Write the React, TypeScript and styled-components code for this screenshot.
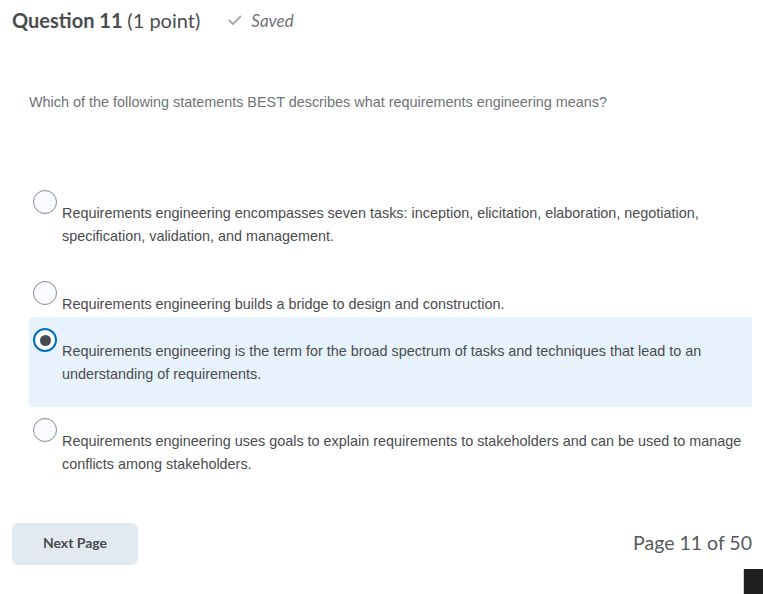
import React from "react";
import styled, { createGlobalStyle } from "styled-components";

const Global = createGlobalStyle`
  html, body { margin: 0; padding: 0; background: #ffffff; }
  * { box-sizing: border-box; }
`;

const Page = styled.div`
  padding: 0 11px 0 12px;
  font-family: Lato, "Open Sans", sans-serif;
  color: #494c4e;
`;

const Header = styled.div`
  display: flex;
  align-items: center;
  height: 40px;
`;

const Title = styled.h2`
  margin: 0;
  font-size: 20px;
  font-weight: 700;
  line-height: 40px;
  color: #494c4e;
  span {
    font-weight: 400;
  }
`;

const SavedTag = styled.div`
  display: flex;
  align-items: center;
  margin-left: 28px;
  gap: 9px;
  font-style: italic;
  font-size: 17px;
  color: #6e7376;
`;

const Body = styled.div`
  padding-left: 17px;
`;

const QuestionText = styled.p`
  margin: 52px 0 0;
  font-family: "Liberation Sans", Arial, sans-serif;
  font-size: 14.4px;
  line-height: 20px;
  color: #6e7376;
`;

const OptionList = styled.div`
  margin-top: 67px;
  display: flex;
  flex-direction: column;
`;

const Option = styled.label<{ $selected?: boolean; $tail: number }>`
  display: flex;
  align-items: flex-start;
  padding: 11px 0 ${(p) => p.$tail}px 4px;
  background: ${(p) => (p.$selected ? "#e8f2fc" : "transparent")};
`;

const Radio = styled.span<{ $checked?: boolean }>`
  flex: 0 0 auto;
  width: 24px;
  height: 24px;
  border-radius: 50%;
  border: ${(p) => (p.$checked ? "2px solid #006fbf" : "1px solid #868c8f")};
  background: ${(p) => (p.$checked ? "#ffffff" : "#f9fbff")};
  display: flex;
  align-items: center;
  justify-content: center;
  &::after {
    content: "";
    display: ${(p) => (p.$checked ? "block" : "none")};
    width: 11px;
    height: 11px;
    border-radius: 50%;
    background: #494c4e;
  }
`;

const OptionText = styled.span`
  margin: 12px 0 0 5px;
  font-family: "Liberation Sans", Arial, sans-serif;
  font-size: 14.4px;
  line-height: 23px;
  color: #494c4e;
`;

const Footer = styled.div`
  margin-top: 26px;
  display: flex;
  align-items: center;
  justify-content: space-between;
`;

const NextButton = styled.button`
  width: 126px;
  height: 42px;
  border: none;
  border-radius: 6px;
  background: #e3e9f1;
  font-family: Lato, sans-serif;
  font-weight: 700;
  font-size: 14px;
  line-height: 40px;
  padding: 0 0 2px;
  color: #494c4e;
`;

const PageCount = styled.div`
  font-size: 19.5px;
  line-height: 24px;
  margin-top: -2px;
  color: #565a5c;
`;

const Corner = styled.div`
  position: fixed;
  right: 0;
  bottom: 0;
  width: 20px;
  height: 25px;
  background: #1f1f1f;
  border-left: 1px solid #d0d0d0;
`;

const options = [
  {
    text: "Requirements engineering encompasses seven tasks: inception, elicitation, elaboration, negotiation, specification, validation, and management.",
    tail: 22,
  },
  {
    text: "Requirements engineering builds a bridge to design and construction.",
    tail: 1,
  },
  {
    text: "Requirements engineering is the term for the broad spectrum of tasks and techniques that lead to an understanding of requirements.",
    tail: 21,
    selected: true,
  },
  {
    text: "Requirements engineering uses goals to explain requirements to stakeholders and can be used to manage conflicts among stakeholders.",
    tail: 21,
  },
];

export default function App() {
  return (
    <Page>
      <Global />
      <Header>
        <Title>
          Question 11 <span>(1 point)</span>
        </Title>
        <SavedTag>
          <svg width="14" height="11" viewBox="0 0 14 11">
            <polyline
              points="1.5,5.5 5,9 12.5,1.5"
              fill="none"
              stroke="#a7acb0"
              strokeWidth="2"
              strokeLinecap="round"
              strokeLinejoin="round"
            />
          </svg>
          Saved
        </SavedTag>
      </Header>
      <Body>
        <QuestionText>
          Which of the following statements BEST describes what requirements engineering means?
        </QuestionText>
        <OptionList>
          {options.map((o, i) => (
            <Option key={i} $selected={o.selected} $tail={o.tail}>
              <Radio $checked={o.selected} />
              <OptionText>{o.text}</OptionText>
            </Option>
          ))}
        </OptionList>
      </Body>
      <Footer>
        <NextButton>Next Page</NextButton>
        <PageCount>Page 11 of 50</PageCount>
      </Footer>
      <Corner />
    </Page>
  );
}
